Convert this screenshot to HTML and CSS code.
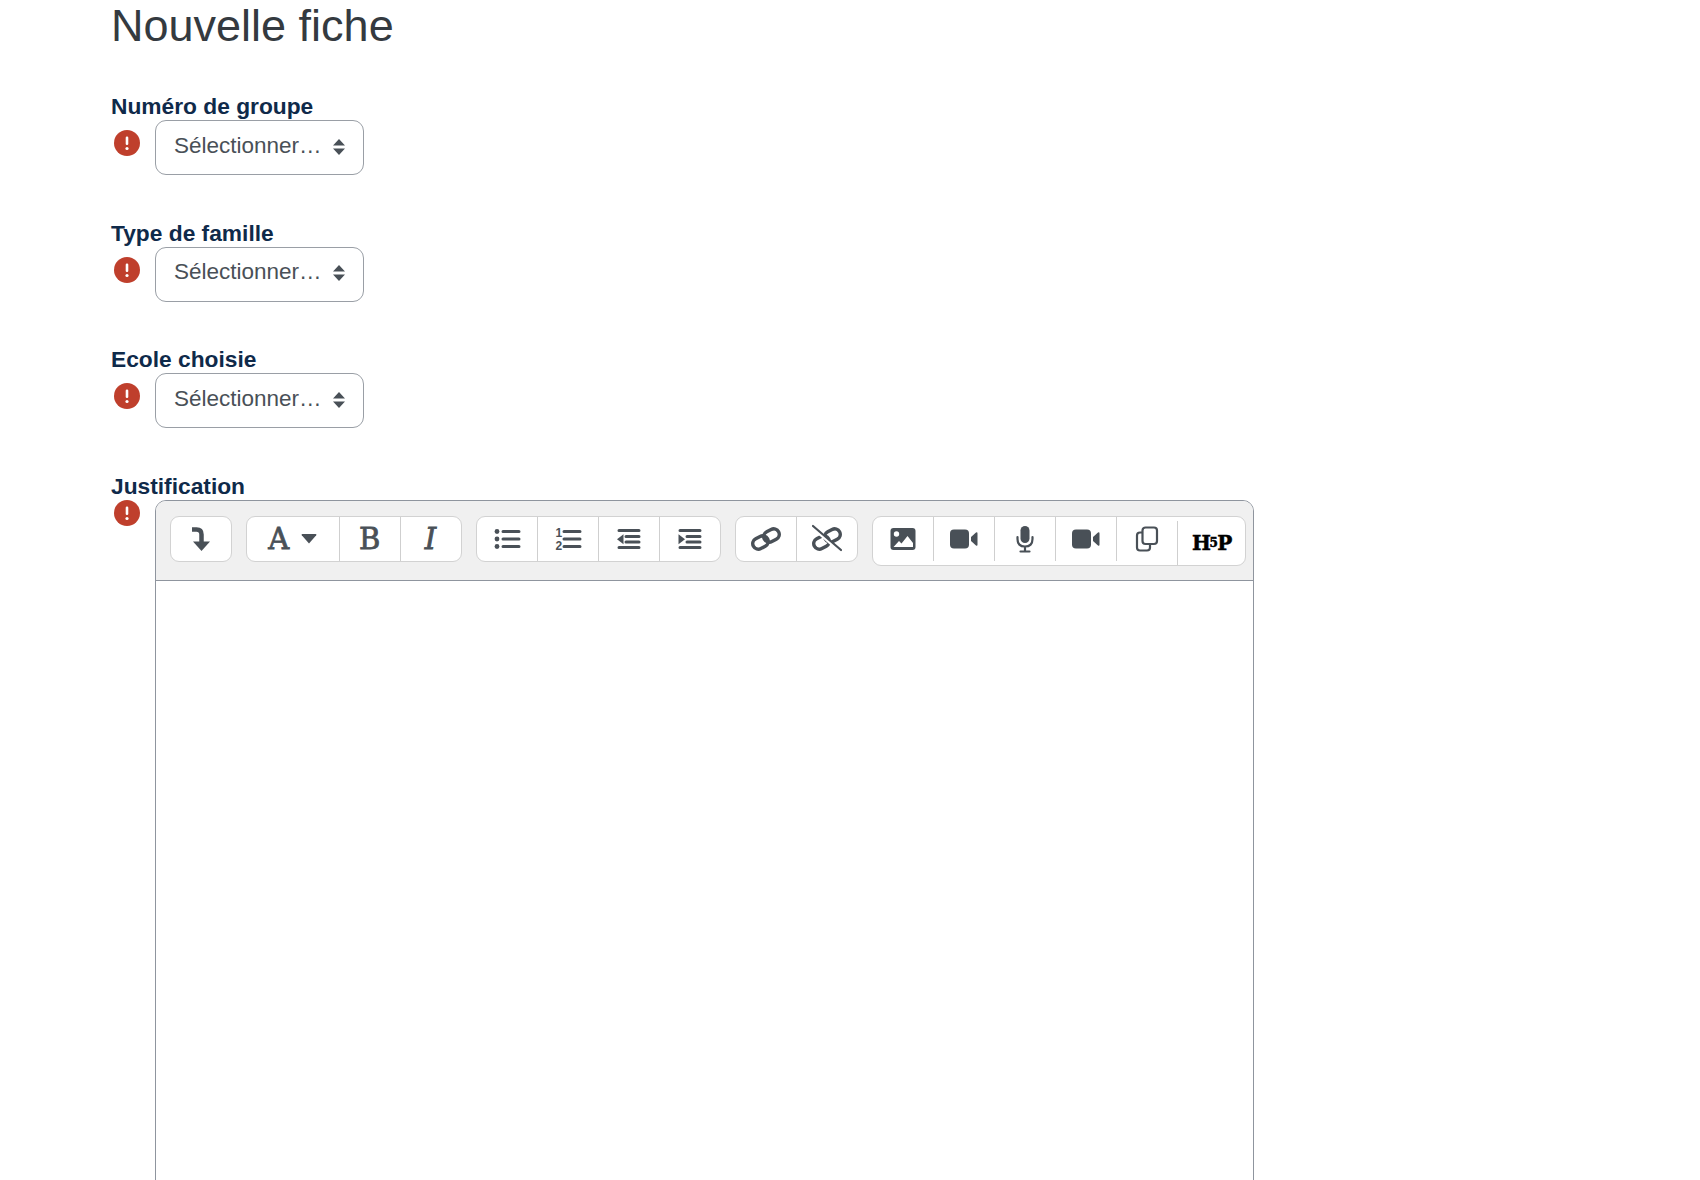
FILE: index.html
```html
<html>
  <head>
    <meta charset="utf-8" />
    <title>Nouvelle fiche</title>
    <link rel="stylesheet" href="styles.css">
  </head>
  <body>
    <h1>Nouvelle fiche</h1>

    <div class="field">
      <label>Numéro de groupe</label>
      <div class="row">
        <svg class="err" viewBox="0 0 26 26"><circle cx="13" cy="13" r="13" /><rect x="11.700" y="6.500" width="2.600" height="8.500" rx="1.200" /><circle cx="13" cy="18.500" r="1.600" /></svg>
        <div class="select">
          <span>Sélectionner…</span>
          <svg viewBox="0 0 12 16"><path d="M6 0l6 6.500H0zM6 16L0 9.500h12z" /></svg>
        </div>
      </div>
    </div>

    <div class="field">
      <label>Type de famille</label>
      <div class="row">
        <svg class="err" viewBox="0 0 26 26"><circle cx="13" cy="13" r="13" /><rect x="11.700" y="6.500" width="2.600" height="8.500" rx="1.200" /><circle cx="13" cy="18.500" r="1.600" /></svg>
        <div class="select">
          <span>Sélectionner…</span>
          <svg viewBox="0 0 12 16"><path d="M6 0l6 6.500H0zM6 16L0 9.500h12z" /></svg>
        </div>
      </div>
    </div>

    <div class="field">
      <label>Ecole choisie</label>
      <div class="row">
        <svg class="err" viewBox="0 0 26 26"><circle cx="13" cy="13" r="13" /><rect x="11.700" y="6.500" width="2.600" height="8.500" rx="1.200" /><circle cx="13" cy="18.500" r="1.600" /></svg>
        <div class="select">
          <span>Sélectionner…</span>
          <svg viewBox="0 0 12 16"><path d="M6 0l6 6.500H0zM6 16L0 9.500h12z" /></svg>
        </div>
      </div>
    </div>

    <div class="field">
      <label>Justification</label>
      <div class="row">
        <svg class="err top" viewBox="0 0 26 26"><circle cx="13" cy="13" r="13" /><rect x="11.700" y="6.500" width="2.600" height="8.500" rx="1.200" /><circle cx="13" cy="18.500" r="1.600" /></svg>
        <div class="editor">
          <div class="toolbar">
            <div class="group">
              <div class="btn">
                <svg class="ico" viewBox="0 0 30 30"><path class="line" d="M6 5.500h4.500q5 0 5 5V19" /><path d="M7 17.500h17L15.500 27z" /></svg>
              </div>
            </div>

            <div class="group">
              <div class="btn wide">
                <span class="glyph">A</span>
                <svg class="caret" viewBox="0 0 16 10"><path d="M1.500 0h13q1.500 0 .7 1.300L8 9.500.8 1.300Q0 0 1.500 0z" /></svg>
              </div>
              <div class="btn"><span class="glyph">B</span></div>
              <div class="btn"><span class="glyph slant">I</span></div>
            </div>

            <div class="group">
              <div class="btn">
                <svg class="ico" viewBox="0 0 30 30">
                  <circle cx="5" cy="7.500" r="2.400" /><circle cx="5" cy="15" r="2.400" /><circle cx="5" cy="22.500" r="2.400" />
                  <path class="line thin" d="M11 7.500h16M11 15h16M11 22.500h16" />
                </svg>
              </div>
              <div class="btn">
                <svg class="ico" viewBox="0 0 30 30">
                  <text class="num" x="2.500" y="13">1</text><text class="num" x="2.500" y="26">2</text>
                  <path class="line thin" d="M11 7.500h16M11 15h16M11 22.500h16" />
                </svg>
              </div>
              <div class="btn">
                <svg class="ico" viewBox="0 0 30 30">
                  <path class="line thin" d="M5 6.500h20M12 12.500h13M12 18h13M5 23.500h20" />
                  <path d="M3 15.200l6.500-5v10z" />
                </svg>
              </div>
              <div class="btn">
                <svg class="ico" viewBox="0 0 30 30">
                  <path class="line thin" d="M5 6.500h20M12 12.500h13M12 18h13M5 23.500h20" />
                  <path d="M10 15.200l-6.500-5v10z" />
                </svg>
              </div>
            </div>

            <div class="group">
              <div class="btn">
                <svg class="ico big" viewBox="0 0 30 30">
                  <g class="chain" transform="rotate(-28 15 15)">
                    <rect x="0.500" y="10" width="16" height="11" rx="5.500" />
                    <rect x="13.500" y="9" width="16" height="11" rx="5.500" />
                  </g>
                </svg>
              </div>
              <div class="btn">
                <svg class="ico big" viewBox="0 0 30 30">
                  <g class="chain" transform="rotate(-28 15 15)">
                    <rect x="0.500" y="10" width="16" height="11" rx="5.500" />
                    <rect x="13.500" y="9" width="16" height="11" rx="5.500" />
                  </g>
                  <path class="cut" d="M1 4l28 24" />
                  <path class="line slim" d="M1 2l28 24" />
                </svg>
              </div>
            </div>

            <div class="group tall">
              <div class="btn">
                <svg class="ico" viewBox="0 0 30 30">
                  <rect x="2.500" y="4" width="25" height="22" rx="3" />
                  <circle class="hole" cx="8.500" cy="10" r="2.700" />
                  <path class="hole" d="M5.500 23l5.500-6 2.500 2.500 6-7.500 5.500 7v4z" />
                </svg>
              </div>
              <div class="btn">
                <svg class="ico" viewBox="0 0 30 30">
                  <rect x="1" y="5.500" width="19" height="19" rx="4" />
                  <path d="M22 13l5-4.500q1.500-.8 1.500 1v11q0 1.800-1.500 1L22 17z" />
                </svg>
              </div>
              <div class="btn">
                <svg class="ico" viewBox="0 0 30 30">
                  <rect x="10.500" y="2" width="9" height="17" rx="4.500" />
                  <path class="line slim" d="M7.500 13v2q0 7.500 7.500 7.500t7.500-7.500v-2M15 23v4M10.500 27.500h9" />
                </svg>
              </div>
              <div class="btn">
                <svg class="ico" viewBox="0 0 30 30">
                  <rect x="1" y="5.500" width="19" height="19" rx="4" />
                  <path d="M22 13l5-4.500q1.500-.8 1.500 1v11q0 1.800-1.500 1L22 17z" />
                </svg>
              </div>
              <div class="btn">
                <svg class="ico" viewBox="0 0 30 30">
                  <rect class="outline" x="10.500" y="3.500" width="14.500" height="16.500" rx="3" />
                  <path class="line slim" d="M10 8.500H8q-3 0-3 3v12q0 3 3 3h7q3 0 3-3v-3" />
                </svg>
              </div>
              <div class="btn h5p">H<small>5</small>P</div>
            </div>
          </div>
          <div class="edit-area"></div>
        </div>
      </div>
    </div>
  </body>
</html>
```

FILE: styles.css
```css
html {
  overflow: hidden;
}
body {
  margin: 0;
  height: 1180px;
  overflow: hidden;
  padding-left: 111px;
  font-family: "Liberation Sans", Arial, sans-serif;
  background-color: white;
}
h1 {
  margin: 0 0 40px 0;
  font-size: 45px;
  font-weight: normal;
  line-height: 52px;
  color: #343a40;
}
.field {
  margin-bottom: 43.670px;
}
label {
  display: block;
  font-size: 22.750px;
  font-weight: bold;
  line-height: 28px;
  color: #0f2a4a;
}
.row {
  display: flex;
  align-items: flex-start;
}
.err {
  width: 26px;
  height: 26px;
  margin: 10px 15px 0 3px;
  flex: none;
  fill: white;
}
.err.top {
  margin-top: 0;
}
.err > circle:first-child {
  fill: #bf3f2c;
}
.select {
  box-sizing: border-box;
  width: 209px;
  height: 55px;
  padding: 0 18px 4px 18px;
  display: flex;
  align-items: center;
  justify-content: space-between;
  border: 1px solid #9a9fa6;
  border-radius: 11px;
  font-size: 22.500px;
  color: #495057;
}
.select svg {
  width: 12px;
  height: 16px;
  margin-top: 2px;
  fill: #495057;
}
.editor {
  box-sizing: border-box;
  width: 1099px;
  border: 1px solid #8f959e;
  border-radius: 11px 11px 0 0;
}
.toolbar {
  box-sizing: border-box;
  height: 80px;
  padding: 15px 0 0 14px;
  display: flex;
  align-items: flex-start;
  gap: 14.600px;
  background-color: #f0f0f0;
  border-bottom: 1px solid #8f959e;
  border-radius: 10px 10px 0 0;
}
.group {
  display: flex;
  height: 46px;
  box-sizing: border-box;
  background-color: white;
  border: 1px solid #d2d2d2;
  border-radius: 9px;
  color: #495057;
}
.group.tall {
  height: 50px;
}
.btn {
  width: 61px;
  height: 44px;
  box-sizing: border-box;
  display: flex;
  align-items: center;
  justify-content: center;
  border-left: 1px solid #cfcfcf;
}
.btn:first-child {
  width: 59.500px;
  border-left: none;
}
.btn.wide {
  width: 91.500px;
  gap: 12px;
}
.glyph {
  font-family: "DejaVu Serif", serif;
  font-size: 29px;
  line-height: 30px;
  -webkit-text-stroke: 0.800px #495057;
}
.slant {
  font-style: italic;
}
.caret {
  width: 16px;
  height: 10px;
  fill: #495057;
}
.ico {
  width: 30px;
  height: 30px;
  fill: #495057;
}
.line {
  fill: none;
  stroke: #495057;
  stroke-width: 4.500;
}
.line.thin {
  stroke-width: 3;
  stroke-linecap: round;
}
.line.slim {
  stroke-width: 2.200;
  stroke-linecap: round;
}
.outline {
  fill: none;
  stroke: #495057;
  stroke-width: 2.200;
}
.cut {
  fill: none;
  stroke: white;
  stroke-width: 3;
}
.chain {
  fill: none;
  stroke: #495057;
  stroke-width: 3.500;
}
.hole {
  fill: white;
}
.num {
  font-size: 12px;
  font-weight: bold;
  font-family: "Liberation Sans", sans-serif;
}
.h5p {
  width: 68px;
  margin-top: 4px;
  font-family: "DejaVu Serif", serif;
  font-size: 20px;
  font-weight: bold;
  letter-spacing: -1.500px;
  -webkit-text-stroke: 0.500px black;
  color: black;
}
.h5p small {
  font-size: 12px;
  letter-spacing: -0.500px;
}
.edit-area {
  height: 720px;
  background-color: white;
}
```
